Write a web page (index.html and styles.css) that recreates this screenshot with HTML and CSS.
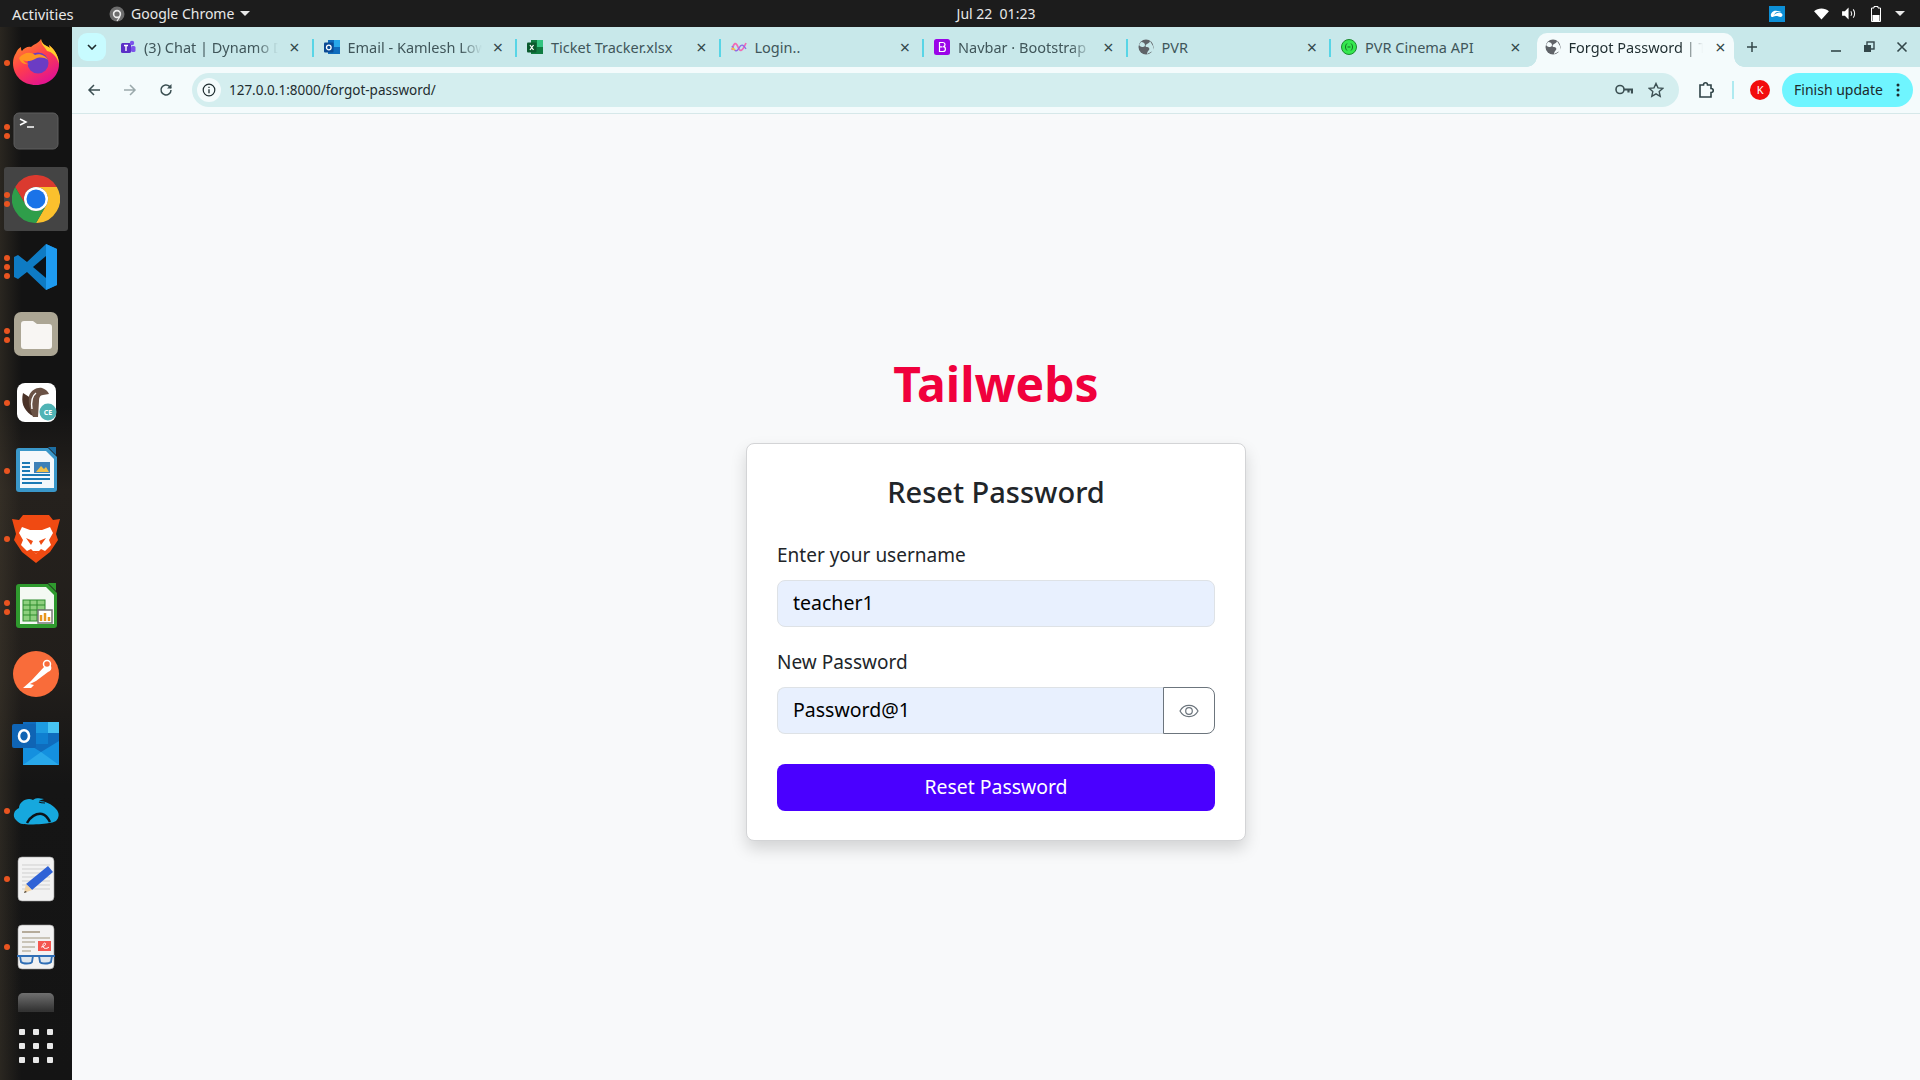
FILE: index.html
```html
<!DOCTYPE html>
<html lang="en">
<head>
    <meta charset="UTF-8">
    <title>Forgot Password | Tailwebs</title>
    <link rel="stylesheet" href="styles.css">
</head>
<body>
    <div class="topbar">
        <div class="topbar-left">
            <span class="activities">Activities</span>
            <span class="app-menu">
                <svg class="app-icon" viewBox="0 0 16 16"><circle cx="8" cy="8" r="7.500" fill="#6d6d6d"/><circle cx="8" cy="8" r="3.400" fill="none" stroke="#eee" stroke-width="1.600"/><path d="M11 10.500l-3 4.500" stroke="#eee" stroke-width="1.200"/></svg>
                Google Chrome
                <span class="caret"></span>
            </span>
        </div>
        <div class="clock">Jul 22&nbsp; 01:23</div>
        <div class="tray">
            <svg class="tray-zoom" viewBox="0 0 16 16"><rect width="16" height="16" fill="#0d8fd6"/><path d="M2 10c-1-3 3-6 6-5 2 0 3 0 4 1-3-1-6 0-7 3 2-2 5-3 7-2 2 1 2 3 0 4-2 0-3-1-5-1-2 0-3 1-3 1-1 0-2 0-2-1z" fill="#fff"/></svg>
            <svg class="tray-wifi" viewBox="0 0 16 14"><path d="M0 4.500C4.500 .5 11.500 .5 16 4.500L8 13.500z" fill="#fff"/></svg>
            <svg class="tray-sound" viewBox="0 0 16 14"><path d="M0 4.500h3l4-4v13l-4-4H0z" fill="#fff"/><path d="M9.500 4.500c1 1.500 1 3.500 0 5M12 2.500c2 2.500 2 6.500 0 9" fill="none" stroke="#fff" stroke-width="1.100"/></svg>
            <svg class="tray-battery" viewBox="0 0 10 16"><path d="M3 .5h4v1.500h2.500v13.500H.5V2H3z" fill="none" stroke="#fff"/><rect x="1.500" y="9" width="7" height="6" fill="#fff"/></svg>
            <span class="caret caret-tray"></span>
        </div>
    </div>

    <div class="desktop">
        <nav class="dock">
            <div class="dock-list">
                <div class="dock-item">
                    <span class="dots"><i></i></span>
                    <svg class="dock-icon" viewBox="0 1 48 48">
                        <defs>
                            <linearGradient id="ffBody" x1="0" y1="0" x2="0.6" y2="1"><stop offset="0" stop-color="#ff9a1f"/><stop offset=".55" stop-color="#ff3d4e"/><stop offset="1" stop-color="#e3148f"/></linearGradient>
                        </defs>
                        <path d="M29 1c1 6 5 6 9 9-1-3-1-3-1-3 6 5 10 12 10 19 0 12-10 21-23 21S1 38 1 25c0-4 1-7 3-10 1-3 3-5 5-6 0 2 0 3 1 4 2-3 6-5 9-4 3-3 8-4 10-8z" fill="url(#ffBody)"/>
                        <path d="M29 1c1 6 5 6 9 9-1-3-1-3-1-3 6 5 10 12 10 19-2-8-7-12-12-13-2-4-6-6-6-12z" fill="#ffcf2b"/>
                        <circle cx="26" cy="25" r="10.500" fill="#6b3cc4"/>
                        <path d="M7 20c4-5 11-7 16-3 5-2 11 1 13 5-4-3-9-3-13-1-3 2-9 3-12 1 2 3 4 4 6 4-5 1-9-2-10-6z" fill="#ff9521"/>
                    </svg>
                </div>
                <div class="dock-item">
                    <span class="dots"><i></i><i></i></span>
                    <svg class="dock-icon" viewBox="0 0 48 48"><rect x="2" y="6" width="44" height="36" rx="5" fill="#4b4b4b" stroke="#5e5e5e"/><path d="M8 12l6 3-6 3" fill="none" stroke="#fff" stroke-width="1.500"/><path d="M15 20h7" stroke="#fff" stroke-width="1.500"/></svg>
                </div>
                <div class="dock-item dock-item-active">
                    <span class="dots"><i></i><i></i></span>
                    <svg class="dock-icon" viewBox="0 0 48 48">
                        <path d="M3.200 12A24 24 0 0 1 44.800 12H24A12 12 0 0 0 13.600 30z" fill="#db3a2f"/>
                        <path d="M3.200 12A24 24 0 0 1 44.800 12H24A12 12 0 0 0 13.600 30z" fill="#fbc02d" transform="rotate(120 24 24)"/>
                        <path d="M3.200 12A24 24 0 0 1 44.800 12H24A12 12 0 0 0 13.600 30z" fill="#2f9e4a" transform="rotate(240 24 24)"/>
                        <circle cx="24" cy="24" r="12" fill="#fff"/>
                        <circle cx="24" cy="24" r="9.500" fill="#1a73e8"/>
                    </svg>
                </div>
                <div class="dock-item">
                    <span class="dots"><i></i><i></i><i></i></span>
                    <svg class="dock-icon" viewBox="0 0 48 48"><path d="M34 1l11 5v36l-11 5-19-18-9 7-4-2V14l4-2 9 7z" fill="#0e7bc4"/><path d="M34 1l11 5v36l-11 5z" fill="#1e9bf0"/><path d="M34 13L21 24l13 11z" fill="#0b1218"/></svg>
                </div>
                <div class="dock-item">
                    <span class="dots"><i></i><i></i></span>
                    <svg class="dock-icon" viewBox="0 0 48 48"><rect x="2" y="1" width="44" height="44" rx="7" fill="#aca694"/><path d="M9 13a3 3 0 0 1 3-3h9l4 3h12a3 3 0 0 1 3 3v19a3 3 0 0 1-3 3H12a3 3 0 0 1-3-3z" fill="#f8f6f3"/></svg>
                </div>
                <div class="dock-item">
                    <span class="dots"><i></i></span>
                    <svg class="dock-icon" viewBox="0 0 48 48"><rect x="5" y="4" width="39" height="39" rx="8" fill="#fff"/><path d="M11 14c-2 9 0 16 8 22l5 2c-2-5-3-11-2-17z" fill="#4a3228"/><path d="M17 17c2-6 8-9 13-8 3 1 6 3 7 6l-6 1c-3 0-4 3-4 6l-1 16h-5c-3-7-5-14-4-21z" fill="#6a5245"/><path d="M24 14c-4 3-5 9-4 16" fill="none" stroke="#fff" stroke-width="1.400"/><circle cx="36" cy="33" r="8.500" fill="#4fb3b5"/><text class="badge-text" x="36" y="36">CE</text></svg>
                </div>
                <div class="dock-item">
                    <span class="dots"><i></i></span>
                    <svg class="dock-icon" viewBox="0 0 48 48"><path d="M7 1h29l9 9v32a3 3 0 0 1-3 3H7a3 3 0 0 1-3-3V4a3 3 0 0 1 3-3z" fill="#3a97c9"/><path d="M8 4h26l8 8v29H8z" fill="#f4f8fb"/><path d="M36 0h8v8z" fill="#1d6fa3"/><path d="M10 16h8M10 20h8M10 24h8M10 28h28M10 32h28M10 36h20" stroke="#1c7ab5" stroke-width="2"/><rect x="22" y="15" width="16" height="11" fill="#3d80b8"/><path d="M24 25l5-6 3 3 2-2 3 5z" fill="#f1c04a"/></svg>
                </div>
                <div class="dock-item">
                    <span class="dots"><i></i></span>
                    <svg class="dock-icon" viewBox="0 0 48 48"><path d="M11 0h26l4 5 7-1-4 15 2 6-8 12-14 11-14-11-8-12 2-6L0 4l7 1z" fill="#f04a12"/><path d="M10 12l8 3h12l8-3 3 6-4 7 2 5-6 6-4-2-5 5-5-5-4 2-6-6 2-5-4-7z" fill="#fff"/><path d="M14 23l7 3-2 4zM34 23l-7 3 2 4zM20 36h8l-4 3z" fill="#f04a12"/></svg>
                </div>
                <div class="dock-item">
                    <span class="dots"><i></i><i></i></span>
                    <svg class="dock-icon" viewBox="0 0 48 48"><path d="M7 1h29l9 9v32a3 3 0 0 1-3 3H7a3 3 0 0 1-3-3V4a3 3 0 0 1 3-3z" fill="#2f9a2e"/><path d="M8 4h26l8 8v29H8z" fill="#f4f9f3"/><path d="M36 0h8v8z" fill="#2f9a2e"/><rect x="11" y="17" width="22" height="21" fill="#8fd07f" stroke="#2c8b2c"/><path d="M11 22h22M11 27h22M11 32h22M18 17v21M25 17v21" stroke="#2c8b2c"/><rect x="26" y="27" width="14" height="13" fill="#fff" stroke="#777" stroke-width="1.500"/><path d="M29 38v-6M33 38v-8M37 38v-4" stroke="#e9961e" stroke-width="2.500"/></svg>
                </div>
                <div class="dock-item">
                    <svg class="dock-icon" viewBox="0 1 48 48"><circle cx="24" cy="24" r="23" fill="#f96c3a"/><path d="M11 38l8-7 13-14c2-3 6-3 7-1 1 3 0 5-3 6L24 31l-6 3 4 1-3 3z" fill="#fff"/><circle cx="35" cy="14" r="3.500" fill="#f96c3a" stroke="#fff" stroke-width="1.500"/></svg>
                </div>
                <div class="dock-item">
                    <svg class="dock-icon dock-icon-wide" viewBox="0 -2 48 48"><rect x="11" y="1" width="36" height="30" fill="#0f6cbd"/><rect x="24" y="1" width="12" height="11" fill="#1d9be0"/><rect x="36" y="1" width="11" height="11" fill="#47c4f2"/><rect x="24" y="12" width="12" height="11" fill="#0f7fd0"/><path d="M11 20l18 11 18-11v24H11z" fill="#1490df"/><path d="M11 44l18-13 18 13z" fill="#28a8ea"/><rect x="0" y="3" width="24" height="24" rx="2" fill="#0f64b4"/><ellipse cx="12" cy="15" rx="5" ry="5.800" fill="none" stroke="#fff" stroke-width="2.600"/></svg>
                </div>
                <div class="dock-item">
                    <span class="dots"><i></i></span>
                    <svg class="dock-icon dock-icon-wide" viewBox="0 0 48 48"><path d="M4 33c-4-4-2-10 3-12 0-6 8-11 14-8 2-2 7-3 11-1-2 1-4 1-5 2 6 0 13 3 17 8 4 4 3 9 0 12-2 1-5 2-7 2-3 1-20 2-26 1-3 0-5-2-7-4z" fill="#16a8de"/><path d="M15 36c3-6 9-10 15-9 4 1 6 4 8 8" fill="none" stroke="#0d1318" stroke-width="2.500"/><path d="M24 9c2 2 5 2 8 2M27 15c2 1 4 1 6 1" fill="none" stroke="#0d1318" stroke-width="1.200"/></svg>
                </div>
                <div class="dock-item">
                    <span class="dots"><i></i></span>
                    <svg class="dock-icon" viewBox="0 0 48 48"><rect x="6" y="2" width="36" height="44" rx="4" fill="#f2f2f2" stroke="#9b9b9b" stroke-width=".6"/><path d="M10 10h28M10 14h28M10 18h28M10 22h28M10 26h28M10 30h28M10 34h28" stroke="#cfcfcf"/><path d="M36 11l5 6-21 18-6-6z" fill="#2f62d6"/><path d="M14 29l6 6-8 3z" fill="#f1d3a5"/><path d="M13 36l-1 2 3-1z" fill="#333"/></svg>
                </div>
                <div class="dock-item">
                    <span class="dots"><i></i></span>
                    <svg class="dock-icon" viewBox="0 0 48 48"><rect x="6" y="2" width="36" height="44" rx="4" fill="#f2f2f2" stroke="#9b9b9b" stroke-width=".6"/><path d="M10 9h18" stroke="#b5ab9a" stroke-width="2"/><path d="M10 15h28M10 19h13M10 24h13M10 28h9" stroke="#c9c4b8" stroke-width="2"/><rect x="26" y="18" width="13" height="10" fill="#f4564f"/><path d="M29 24c3 0 6-3 4-4-2 0-3 3-1 5 2 1 4 0 5-1" fill="none" stroke="#fff"/><path d="M5 33h38" stroke="#2f6eb5" stroke-width="2"/><path d="M8 33h13l-1 6c-1 2-9 2-11 0zM27 33h13l-1 6c-2 2-10 2-11 0z" fill="#dfe7ee" stroke="#2f6eb5" stroke-width="1.800"/></svg>
                </div>
                <div class="dock-item">
                    <svg class="dock-icon dock-icon-fade" viewBox="0 0 48 48"><defs><linearGradient id="fadeGrey" x1="0" y1="0" x2="0" y2="1"><stop offset="0" stop-color="#707070"/><stop offset=".4" stop-color="#333"/></linearGradient></defs><rect x="6" y="2" width="36" height="44" rx="5" fill="url(#fadeGrey)"/></svg>
                </div>
            </div>
            <div class="show-apps">
                <i></i><i></i><i></i><i></i><i></i><i></i><i></i><i></i><i></i>
            </div>
        </nav>

        <div class="browser">
            <div class="tabstrip">
                <button class="tab-search"><svg viewBox="0 0 10 6" width="10" height="6"><path d="M1 1l4 4 4-4" fill="none" stroke="#1d2a2c" stroke-width="1.600"/></svg></button>
                <div class="tab">
                    <svg class="favicon" viewBox="0 0 16 16"><rect x="1" y="4" width="10" height="10" rx="1.500" fill="#5b2fc7"/><path d="M4 6.500h4M6 6.500V12" stroke="#fff" stroke-width="1.400"/><circle cx="12" cy="4" r="2.200" fill="#7b53eb"/><rect x="11" y="7" width="4.500" height="6" rx="1.500" fill="#7b53eb"/></svg>
                    <span class="tab-title">(3) Chat | Dynamo D</span>
                    <span class="tab-close">×</span>
                </div>
                <div class="tab">
                    <svg class="favicon" viewBox="0 0 16 16"><rect x="4" y="1" width="12" height="14" fill="#0f6cbd"/><rect x="10" y="1" width="6" height="7" fill="#28a8ea"/><rect x="0" y="3.500" width="9.500" height="10" rx="1" fill="#0a4a94"/><circle cx="4.800" cy="8.500" r="2.300" fill="none" stroke="#fff" stroke-width="1.300"/></svg>
                    <span class="tab-title">Email - Kamlesh Low</span>
                    <span class="tab-close">×</span>
                </div>
                <div class="tab">
                    <svg class="favicon" viewBox="0 0 16 16"><rect x="4" y="1" width="12" height="14" fill="#107c41"/><rect x="10" y="1" width="6" height="7" fill="#33c481"/><rect x="0" y="3.500" width="9.500" height="10" rx="1" fill="#0b5a2e"/><path d="M3 6l3.500 5M6.500 6L3 11" stroke="#fff" stroke-width="1.300"/></svg>
                    <span class="tab-title tab-title-full">Ticket Tracker.xlsx</span>
                    <span class="tab-close">×</span>
                </div>
                <div class="tab">
                    <svg class="favicon" viewBox="0 0 16 16"><path d="M1 11C3 3 5 3 7 8s4 5 8-4" fill="none" stroke="#f26ab5" stroke-width="1.800"/><path d="M1 7c3 6 5 6 7 2s4-4 7 1" fill="none" stroke="#8f6be8" stroke-width="1.400"/><path d="M1 9l3 2" stroke="#f6c43d" stroke-width="1.800"/></svg>
                    <span class="tab-title tab-title-full">Login..</span>
                    <span class="tab-close">×</span>
                </div>
                <div class="tab">
                    <svg class="favicon" viewBox="0 0 16 16"><rect width="16" height="16" rx="2.500" fill="#9a05e8"/><path d="M5.500 3.500h3.200c3 0 3 3.800.5 4.200 3 .2 3 4.800-.3 4.800H5.500zM5.500 7.800h3" fill="none" stroke="#fff" stroke-width="1.200"/></svg>
                    <span class="tab-title">Navbar · Bootstrap</span>
                    <span class="tab-close">×</span>
                </div>
                <div class="tab">
                    <svg class="favicon" viewBox="0 0 16 16"><circle cx="8" cy="8" r="7.500" fill="#5f6368"/><path d="M3 3c2 0 4 1 4 3S5 8 4 8 2 7 1 6zM9 15c0-2 1-3 2-4s0-3-2-3-2-2 0-3 3-2 3-3l3 5v5z" fill="#c8e8ea"/></svg>
                    <span class="tab-title tab-title-full">PVR</span>
                    <span class="tab-close">×</span>
                </div>
                <div class="tab">
                    <svg class="favicon" viewBox="0 0 16 16"><circle cx="8" cy="8" r="7.500" fill="#34e84f" stroke="#1b8a2d"/><path d="M6 4.500c-2 2-2 5 0 7M10 4.500c2 2 2 5 0 7M6.500 8h3" fill="none" stroke="#136b22"/></svg>
                    <span class="tab-title tab-title-full">PVR Cinema API</span>
                    <span class="tab-close">×</span>
                </div>
                <div class="tab tab-active">
                    <svg class="favicon" viewBox="0 0 16 16"><circle cx="8" cy="8" r="7.500" fill="#5f6368"/><path d="M3 3c2 0 4 1 4 3S5 8 4 8 2 7 1 6zM9 15c0-2 1-3 2-4s0-3-2-3-2-2 0-3 3-2 3-3l3 5v5z" fill="#f4fbfc"/></svg>
                    <span class="tab-title">Forgot Password | T</span>
                    <span class="tab-close">×</span>
                </div>
                <span class="new-tab">
                    <svg viewBox="0 0 12 12" width="12" height="12"><path d="M6 1v10M1 6h10" stroke="#33474a" stroke-width="1.500"/></svg>
                </span>
                <div class="window-controls">
                    <svg viewBox="0 0 12 12" width="12" height="12"><path d="M1 10h10" stroke="#33474a" stroke-width="1.600"/></svg>
                    <svg viewBox="0 0 12 12" width="12" height="12"><rect x="4" y="1" width="7" height="7" fill="none" stroke="#33474a" stroke-width="1.400"/><rect x="1" y="4" width="7" height="7" fill="#33474a"/></svg>
                    <svg viewBox="0 0 12 12" width="12" height="12"><path d="M1.500 1.500l9 9M10.500 1.500l-9 9" stroke="#33474a" stroke-width="1.600"/></svg>
                </div>
            </div>

            <div class="toolbar">
                <span class="nav-btn"><svg viewBox="0 0 16 16" width="16" height="16"><path d="M14 8H3M8 3L3 8l5 5" fill="none" stroke="#3b4f52" stroke-width="1.500"/></svg></span>
                <span class="nav-btn"><svg viewBox="0 0 16 16" width="16" height="16"><path d="M2 8h11M8 3l5 5-5 5" fill="none" stroke="#9aa9ab" stroke-width="1.500"/></svg></span>
                <span class="nav-btn"><svg viewBox="0 0 16 16" width="16" height="16"><path d="M13 8a5 5 0 1 1-1.500-3.600L13 6" fill="none" stroke="#3b4f52" stroke-width="1.500"/><path d="M13.500 2v4.500H9z" fill="#3b4f52"/></svg></span>
                <div class="omnibox">
                    <span class="site-info"><svg viewBox="0 0 14 14" width="14" height="14"><circle cx="7" cy="7" r="5.800" fill="none" stroke="#1f2d30" stroke-width="1.200"/><path d="M7 6.200v4M7 3.800v1.200" stroke="#1f2d30" stroke-width="1.300"/></svg></span>
                    <span class="url">127.0.0.1:8000/forgot-password/</span>
                    <span class="omni-icons">
                        <svg viewBox="0 0 18 12" width="18" height="12"><circle cx="5" cy="5.500" r="4" fill="none" stroke="#3b4f52" stroke-width="1.600"/><path d="M9 5.500h8v4M13.500 5.500v3" fill="none" stroke="#3b4f52" stroke-width="2.200"/></svg>
                        <svg viewBox="0 0 16 16" width="16" height="16"><path d="M8 1.500l2 4.400 4.700.5-3.500 3.200 1 4.700L8 11.900l-4.200 2.400 1-4.700L1.300 6.400 6 5.900z" fill="none" stroke="#3b4f52" stroke-width="1.400"/></svg>
                    </span>
                </div>
                <span class="ext-btn"><svg viewBox="0 0 18 18" width="18" height="18"><path d="M3 4h3.500c0-3 4-3 4 0H14v3.500c3 0 3 4 0 4V16H3z" fill="none" stroke="#2e4245" stroke-width="1.600"/></svg></span>
                <span class="toolbar-sep"></span>
                <span class="avatar">K</span>
                <button class="finish-update">Finish update
                    <svg viewBox="0 0 4 14" width="4" height="14"><circle cx="2" cy="2" r="1.500" fill="#1d2a2c"/><circle cx="2" cy="7" r="1.500" fill="#1d2a2c"/><circle cx="2" cy="12" r="1.500" fill="#1d2a2c"/></svg>
                </button>
            </div>

            <main class="page">
                <h1 class="brand">Tailwebs</h1>
                <form class="card">
                    <h2 class="card-title">Reset Password</h2>
                    <div class="field">
                        <label class="field-label" for="username">Enter your username</label>
                        <input class="field-input" id="username" type="text" value="teacher1">
                    </div>
                    <div class="field">
                        <label class="field-label" for="password">New Password</label>
                        <div class="input-group">
                            <input class="field-input" id="password" type="text" value="Password@1">
                            <button class="eye-btn" type="button">
                                <svg viewBox="0 0 20 14" width="20" height="14"><path d="M1 7c4-7.500 14-7.500 18 0-4 7.500-14 7.500-18 0z" fill="none" stroke="#6c757d" stroke-width="1.200"/><circle cx="10" cy="7" r="3.300" fill="none" stroke="#6c757d" stroke-width="1.200"/></svg>
                            </button>
                        </div>
                    </div>
                    <button class="submit-btn" type="button">Reset Password</button>
                </form>
            </main>
        </div>
    </div>
</body>
</html>
```

FILE: styles.css
```css
* {
    box-sizing: border-box;
}
body {
    margin: 0;
    height: 1080px;
    overflow: hidden;
    font-family: "Noto Sans", "Open Sans", sans-serif;
    background-color: #f8f9fa;
    display: flex;
    flex-direction: column;
}

/* ubuntu top bar */
.topbar {
    height: 27px;
    background-color: #1c1c1c;
    color: #e8e8e8;
    font-size: 14px;
    display: grid;
    grid-template-columns: 1fr 1fr 1fr;
    align-items: center;
    padding: 0 12px;
    flex: none;
}
.topbar-left {
    display: flex;
    align-items: center;
}
.activities {
    width: 97px;
    font-size: 14.8px;
}
.app-menu {
    display: flex;
    align-items: center;
    gap: 6px;
}
.app-icon {
    width: 16px;
    height: 16px;
}
.caret {
    width: 0;
    height: 0;
    border-left: 5px solid transparent;
    border-right: 5px solid transparent;
    border-top: 5px solid #e8e8e8;
}
.clock {
    text-align: center;
    font-size: 14px;
    padding-left: 72px;
}
.tray {
    display: flex;
    align-items: center;
    justify-content: flex-end;
}
.tray-zoom {
    width: 16px;
    height: 16px;
    margin-right: 29px;
}
.tray-wifi {
    width: 15px;
    height: 13px;
    margin-right: 13px;
}
.tray-sound {
    width: 15px;
    height: 13px;
    margin-right: 14px;
}
.tray-battery {
    width: 10px;
    height: 16px;
    margin-right: 14px;
}
.caret-tray {
    margin-right: 3px;
}

.desktop {
    flex: 1;
    display: flex;
    min-height: 0;
}

/* dock */
.dock {
    width: 72px;
    flex: none;
    display: flex;
    flex-direction: column;
    background-color: #131313;
    background-image:
        linear-gradient(90deg, rgba(70, 62, 48, 0.45), rgba(20, 20, 20, 0) 30%),
        linear-gradient(180deg, #131313 0, #131313 36%, #25211d 44%, #211e1b 62%, #151515 72%, #141414 100%);
}
.dock-list {
    flex: 1;
    min-height: 0;
    overflow: hidden;
    padding-top: 2px;
}
.dock-item {
    height: 68px;
    position: relative;
    display: flex;
    align-items: center;
    justify-content: center;
}
.dock-item-active::before {
    content: "";
    position: absolute;
    left: 4px;
    right: 4px;
    top: 2px;
    bottom: 2px;
    border-radius: 3px;
    background-color: #444;
}
.dock-icon {
    width: 48px;
    height: 48px;
    position: relative;
}
.dock-icon-wide {
    width: 50px;
}
.badge-text {
    font-size: 7px;
    font-weight: 700;
    fill: #fff;
    text-anchor: middle;
}
.dots {
    position: absolute;
    left: 4px;
    top: 0;
    bottom: 0;
    display: flex;
    flex-direction: column;
    justify-content: center;
    gap: 3px;
    z-index: 1;
}
.dots i {
    width: 6px;
    height: 6px;
    border-radius: 50%;
    background-color: #e95420;
}
.show-apps {
    height: 68px;
    flex: none;
    display: grid;
    grid-template-columns: repeat(3, 6px);
    grid-auto-rows: 6px;
    gap: 8px;
    justify-content: center;
    align-content: center;
}
.show-apps i {
    background-color: #e8e8e8;
    border-radius: 1px;
}

/* chrome */
.browser {
    flex: 1;
    min-width: 0;
    display: flex;
    flex-direction: column;
}
.tabstrip {
    height: 40px;
    flex: none;
    background-color: #c8e8ea;
    display: flex;
    align-items: flex-end;
    padding-left: 6px;
}
.tab-search {
    width: 28px;
    height: 28px;
    margin: 0 2px 6px 0;
    border: none;
    padding: 0;
    border-radius: 9px;
    background-color: #c8fbff;
    display: flex;
    align-items: center;
    justify-content: center;
}
.tab {
    width: 203.5px;
    height: 34px;
    flex: none;
    display: flex;
    align-items: center;
    padding: 0 12px 7px 12px;
    font-size: 14.5px;
    color: #40565a;
    position: relative;
}
.tab + .tab::before {
    content: "";
    position: absolute;
    left: 0;
    top: 6px;
    height: 18px;
    width: 2px;
    background-color: #58d5e6;
}
.favicon {
    width: 16px;
    height: 16px;
    flex: none;
}
.tab-title {
    width: 134px;
    margin-left: 8px;
    white-space: nowrap;
    -webkit-mask-image: linear-gradient(90deg, #000 84%, transparent);
    mask-image: linear-gradient(90deg, #000 84%, transparent);
}
.tab-title-full {
    -webkit-mask-image: none;
    mask-image: none;
}
.tab-close {
    margin-left: auto;
    font-size: 18px;
    line-height: 18px;
    color: #33474a;
}
.tab-active {
    width: 197px;
    margin: 0 1px 0 4px;
    padding-left: 8px;
    padding-right: 8px;
    border-radius: 10px 10px 0 0;
    background-color: #f4fbfc;
    color: #1f2d30;
}
.tab-active::after {
    content: "";
    position: absolute;
    bottom: 0;
    right: -10px;
    width: 10px;
    height: 10px;
    background: radial-gradient(circle at 100% 0, transparent 9.5px, #f4fbfc 10px);
}
.tab-active.tab-active::before {
    left: -10px;
    top: auto;
    bottom: 0;
    width: 10px;
    height: 10px;
    background: radial-gradient(circle at 0 0, transparent 9.5px, #f4fbfc 10px);
}
.new-tab {
    margin: 0 0 14px 11px;
    height: 12px;
    display: flex;
}
.window-controls {
    display: flex;
    gap: 21px;
    margin: 0 0 14px auto;
    padding-right: 12px;
}
.toolbar {
    height: 47px;
    flex: none;
    background-color: #f4fbfc;
    border-bottom: 1px solid #d6e8e9;
    display: flex;
    align-items: center;
    padding: 0 7px 1px 4px;
    font-size: 14px;
}
.nav-btn {
    width: 36px;
    display: flex;
    justify-content: center;
}
.omnibox {
    height: 34px;
    width: 1488px;
    margin-left: 8px;
    border-radius: 17px;
    background-color: #d4eeef;
    display: flex;
    align-items: center;
    padding: 0 15px 0 5px;
    color: #1f2d30;
}
.site-info {
    width: 24px;
    height: 24px;
    border-radius: 50%;
    background-color: #f4fbfc;
    display: flex;
    align-items: center;
    justify-content: center;
}
.url {
    margin-left: 8px;
    font-size: 13.5px;
}
.omni-icons {
    margin-left: auto;
    display: flex;
    align-items: center;
    gap: 15px;
}
.ext-btn {
    width: 36px;
    margin-left: 9px;
    display: flex;
    justify-content: center;
}
.toolbar-sep {
    width: 2px;
    height: 18px;
    margin-left: 8px;
    background-color: #aeeaf0;
}
.avatar {
    width: 20px;
    height: 20px;
    margin-left: 16px;
    border-radius: 50%;
    background-color: #f20d0d;
    color: #fff;
    font-size: 11px;
    line-height: 20px;
    text-align: center;
}
.finish-update {
    width: 131px;
    height: 34px;
    margin-left: 12px;
    border: none;
    border-radius: 17px;
    background-color: #6ff5ff;
    color: #1d2a2c;
    font-family: inherit;
    font-size: 14px;
    display: flex;
    align-items: center;
    justify-content: space-between;
    padding: 0 13px 0 12px;
}

/* reset password page */
.page {
    flex: 1;
    display: flex;
    flex-direction: column;
    align-items: center;
    padding-top: 238px;
}
.brand {
    margin: 0 0 27px 0;
    font-size: 48px;
    line-height: 64px;
    font-weight: 700;
    color: #f0003c;
}
.card {
    width: 500px;
    height: 398px;
    padding: 30px;
    background-color: #fff;
    border: 1px solid #d3d4d6;
    border-radius: 8px;
    box-shadow: 0 8px 16px rgba(0, 0, 0, 0.15);
}
.card-title {
    margin: 0 0 31px 0;
    text-align: center;
    font-size: 29px;
    line-height: 36px;
    font-weight: 500;
    color: #212529;
}
.field {
    margin-bottom: 21px;
}
.field-label {
    display: block;
    margin-bottom: 11px;
    font-size: 19px;
    line-height: 28px;
    color: #212529;
}
.field-input {
    display: block;
    width: 100%;
    height: 47px;
    padding: 0 15px 2px 15px;
    background-color: #e8f0fe;
    border: 1px solid #dee2e6;
    border-radius: 8px;
    font-family: inherit;
    font-size: 19.5px;
    color: #000;
}
.input-group {
    display: flex;
}
.input-group .field-input {
    flex: 1;
    min-width: 0;
    border-radius: 8px 0 0 8px;
    border-right: none;
}
.eye-btn {
    width: 52px;
    height: 47px;
    flex: none;
    padding: 0;
    background-color: #fff;
    border: 1px solid #6c757d;
    border-radius: 0 8px 8px 0;
    display: flex;
    align-items: center;
    justify-content: center;
}
.submit-btn {
    display: block;
    width: 100%;
    height: 47px;
    margin-top: 30px;
    padding: 0 0 2px 0;
    border: none;
    border-radius: 8px;
    background-color: #4a00ff;
    color: #fff;
    font-family: inherit;
    font-size: 19.4px;
}
```
